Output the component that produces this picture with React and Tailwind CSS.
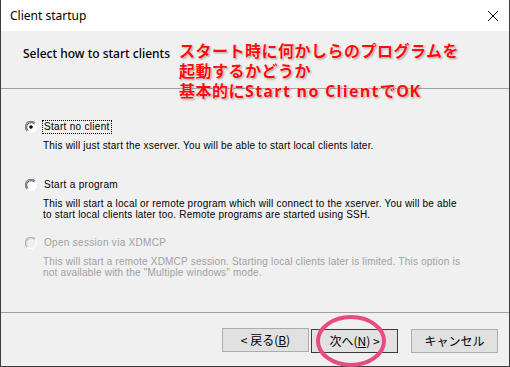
import React from 'react';

const ui = { fontFamily: '"Noto Sans", "Noto Sans CJK JP", sans-serif' };
const gothic = { fontFamily: '"Liberation Sans", "Noto Sans CJK JP", sans-serif' };
const jp = { fontFamily: '"Noto Sans CJK JP", sans-serif' };
const note = { fontFamily: '"Open Sans", "Noto Sans CJK JP", sans-serif' };

function Radio({ checked, disabled }) {
  return (
    <svg width="12" height="12" viewBox="0 0 12 12" className="shrink-0">
      <circle cx="6" cy="6" r="5.5" fill={disabled ? '#f0f0f0' : '#ffffff'} />
      <path d="M2 10 A5.5 5.5 0 0 1 10 2" fill="none" stroke={disabled ? '#b0b0b0' : '#808080'} strokeWidth="1.2" />
      <path d="M3 9.5 A4.3 4.3 0 0 1 9.5 3" fill="none" stroke={disabled ? '#d0d0d0' : '#404040'} strokeWidth="1" />
      <path d="M10 2 A5.5 5.5 0 0 1 2 10" fill="none" stroke="#ffffff" strokeWidth="1" />
      {checked && <circle cx="6" cy="6" r="1.8" fill="#000" />}
    </svg>
  );
}

function Option({ label, desc, checked, disabled, focused, className = '' }) {
  const color = disabled ? 'text-[#a0a0a0]' : 'text-black';
  return (
    <div className={`flex flex-col ${color} ${className}`} style={gothic}>
      <div className="flex items-center gap-[6px] h-[14px]">
        <Radio checked={checked} disabled={disabled} />
        <span className={`text-[10px] leading-[12px] tracking-[0.3px] px-[1px] ${focused ? 'outline-1 outline-dotted outline-black' : ''}`}>
          {label}
        </span>
      </div>
      <div className="pl-[18px] mt-[6px] text-[10px] leading-[11px] tracking-[0.2px]">
        {desc.map((l, i) => <div key={i}>{l}</div>)}
      </div>
    </div>
  );
}

function Button({ children, primary }) {
  return (
    <button
      className={`w-[87px] h-[24px] bg-[#e1e1e1] text-[12px] text-black border ${primary ? 'border-[#3a3a3a]' : 'border-[#adadad]'}`}
      style={jp}
    >
      {children}
    </button>
  );
}

export default function App() {
  return (
    <div className="w-[510px] h-[367px] relative bg-[#f0f0f0] overflow-hidden">
      {/* Title bar */}
      <div className="h-[31px] bg-white flex items-center justify-between pl-[9px] pr-[8px] border-l border-r border-[#3c3c3c]" style={ui}>
        <span className="text-[12px] text-black">Client startup</span>
        <svg width="12" height="12" viewBox="0 0 12 12" className="mr-[2px]">
          <path d="M1 1 L11 11 M11 1 L1 11" stroke="#000" strokeWidth="1" />
        </svg>
      </div>

      <div className="h-[336px] flex flex-col border-l border-r border-b border-[#3c3c3c]">
        {/* Header */}
        <div className="h-[58px] pl-[22px] pt-[9px] border-b border-[#a0a0a0] shrink-0" style={ui}>
          <span className="text-[12px] font-medium text-black">Select how to start clients</span>
        </div>

        {/* Options */}
        <div className="flex-1 flex flex-col pl-[24px] pt-[31px]">
          <Option
            checked
            focused
            label="Start no client"
            desc={['This will just start the xserver. You will be able to start local clients later.']}
          />
          <Option
            className="mt-[27px]"
            label="Start a program"
            desc={[
              'This will start a local or remote program which will connect to the xserver. You will be able',
              'to start local clients later too. Remote programs are started using SSH.',
            ]}
          />
          <Option
            className="mt-[16px]"
            disabled
            label="Open session via XDMCP"
            desc={[
              'This will start a remote XDMCP session. Starting local clients later is limited. This option is',
              'not available with the "Multiple windows" mode.',
            ]}
          />
        </div>

        {/* Footer */}
        <div className="h-[54px] border-t border-[#a0a0a0] flex items-start justify-end pt-[15px] pr-[11px] shrink-0">
          <div className="flex">
            <Button>&lt; 戻る(<u>B</u>)</Button>
            <div className="ml-[2px]"><Button primary>次へ(<u>N</u>) &gt;</Button></div>
            <div className="ml-[13px]"><Button>キャンセル</Button></div>
          </div>
        </div>
      </div>

      {/* Annotation text */}
      <div
        className="absolute left-[179px] top-[41px] text-[16px] leading-[20px] font-bold text-[#ff0a0a] tracking-[0.5px] [text-shadow:0_0_1px_#fff,0_0_2px_#fff,1px_1px_2px_rgba(0,0,0,0.45)]"
        style={note}
      >
        <div>スタート時に何かしらのプログラムを</div>
        <div>起動するかどうか</div>
        <div>基本的に<span className="tracking-[1.3px]">Start no Client</span>でOK</div>
      </div>

      {/* Highlight circle */}
      <svg className="absolute left-[314px] top-[313px]" width="74" height="56" viewBox="0 0 74 56">
        <ellipse cx="37" cy="28" rx="33" ry="24" fill="none" stroke="#e84a82" strokeWidth="4" />
      </svg>
    </div>
  );
}
